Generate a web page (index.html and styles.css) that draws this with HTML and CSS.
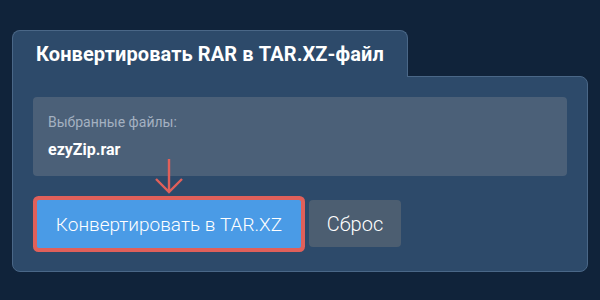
FILE: index.html
```html
<!DOCTYPE html>
<html lang="ru">
<head>
<meta charset="utf-8">
<title>Конвертировать RAR в TAR.XZ</title>
<link rel="stylesheet" href="styles.css">
</head>
<body>
<div class="converter">
  <div class="tab"><h1 class="tab-title">Конвертировать RAR в TAR.XZ-файл</h1></div>
  <div class="panel">
    <div class="files">
      <div class="files-label">Выбранные файлы:</div>
      <div class="files-name">ezyZip.rar</div>
    </div>
    <div class="actions">
      <svg class="pointer" width="30" height="36" viewBox="0 0 30 36" aria-hidden="true">
        <path d="M15 1 V34 M2 21 L15 34 L28 21" fill="none" stroke="#e0605a" stroke-width="2.4"/>
      </svg>
      <button class="btn btn-convert">Конвертировать в TAR.XZ</button>
      <button class="btn btn-reset">Сброс</button>
    </div>
  </div>
</div>
</body>
</html>
```
FILE: styles.css
```css
html, body {
  margin: 0;
  padding: 0;
  background: #10233a;
  font-family: Roboto, "Noto Sans", "Liberation Sans", sans-serif;
}
.converter {
  width: 576px;
  margin: 30px 0 0 12px;
}
.tab {
  width: 371px;
  height: 46px;
  padding: 0 0 0 23px;
  background: #2d4a6a;
  border: 1px solid #4a6787;
  border-bottom: none;
  border-radius: 8px 8px 0 0;
  position: relative;
  z-index: 1;
  margin-bottom: -1px;
  display: flex;
  align-items: center;
}
.tab-title {
  margin: 0;
  color: #ffffff;
  font-size: 20px;
  font-weight: 700;
  letter-spacing: 0.1px;
  line-height: 24px;
}
.panel {
  background: #2d4a6a;
  border: 1px solid #4a6787;
  border-radius: 0 8px 8px 8px;
  padding: 20px 20px 23px 20px;
}
.files {
  background: #4b6078;
  border-radius: 4px;
  height: 79px;
  padding: 15px 15px 0 15px;
  box-sizing: border-box;
}
.files-label {
  color: #a4b1c1;
  font-size: 14px;
  line-height: 20px;
}
.files-name {
  color: #ffffff;
  font-size: 16px;
  font-weight: 700;
  line-height: 20px;
  margin-top: 8px;
}
.actions {
  display: flex;
  align-items: flex-start;
  gap: 8px;
  margin: 24px 0 0 4px;
  position: relative;
}
.pointer {
  position: absolute;
  left: 117px;
  top: -42px;
}
.btn {
  border: none;
  color: #ffffff;
  font-family: inherit;
  cursor: pointer;
}
.btn-convert {
  width: 264px;
  height: 48px;
  background: #4a9be6;
  font-size: 19px;
  font-weight: 300;
  border-radius: 2px;
  box-shadow: 0 0 0 4px #e0605a;
}
.btn-reset {
  width: 92px;
  height: 47px;
  background: #4c5e71;
  font-size: 20px;
  font-weight: 300;
  border-radius: 4px;
}
```
